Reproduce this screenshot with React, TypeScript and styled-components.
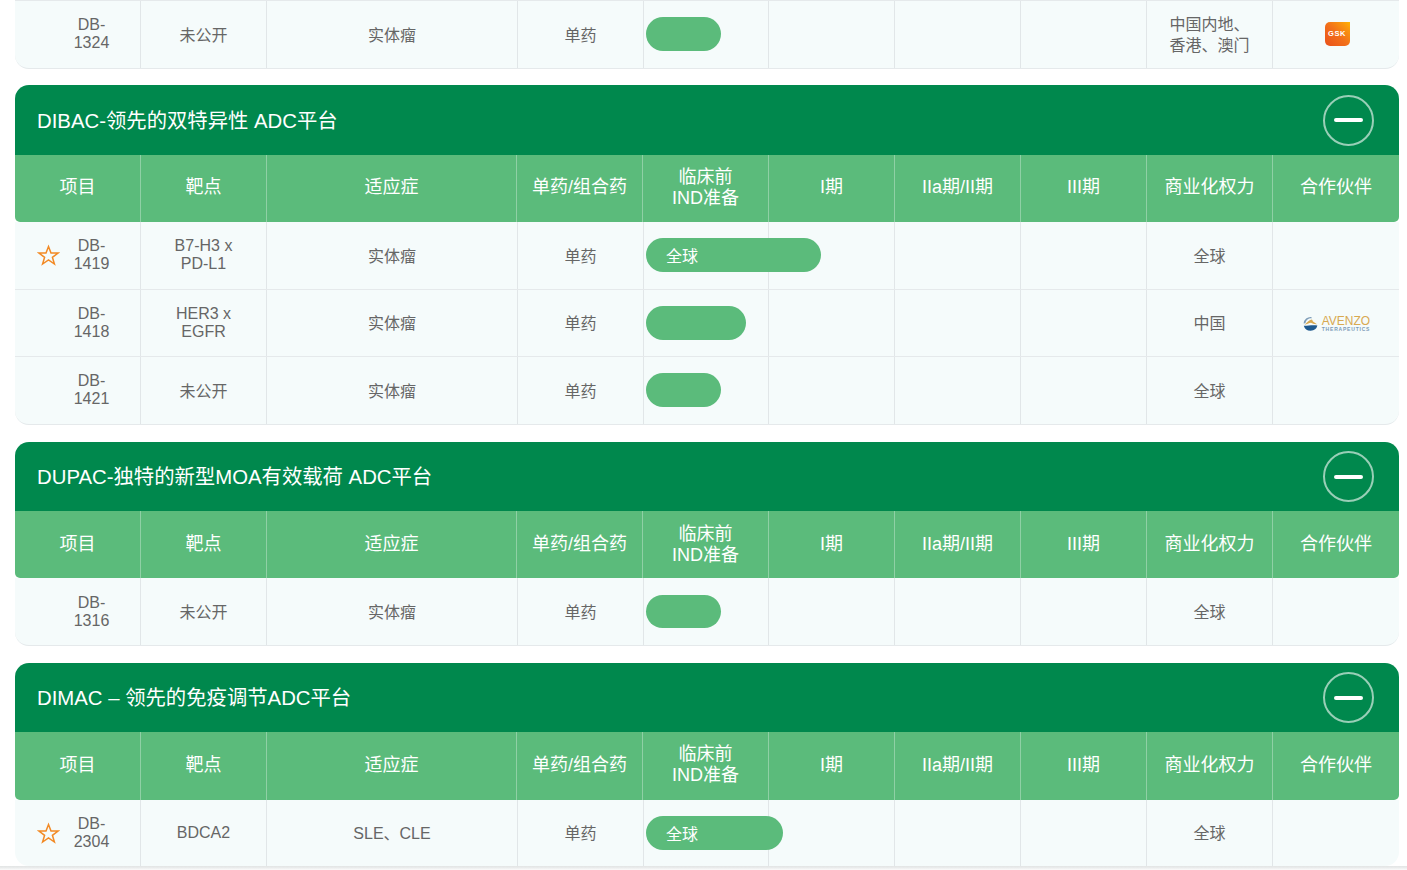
import React from "react";
import styled, { createGlobalStyle } from "styled-components";

const Global = createGlobalStyle`
  html, body { margin: 0; padding: 0; background: #fff; }
  body { font-family: "Liberation Sans", "Noto Sans CJK SC", Arial, sans-serif; color: #666; overflow: hidden; }
`;

const Page = styled.div`
  width: 1407px;
  height: 870px;
  overflow: hidden;
  position: relative;
  box-sizing: border-box;
  padding: 0 8px 0 15px;
  display: flex;
  flex-direction: column;
  gap: 16px;
`;

const PageEdge = styled.div`
  position: absolute;
  left: 0;
  right: 0;
  bottom: 0;
  height: 4px;
  background: linear-gradient(#e2e4e4, #e9ebeb 40%, #f5f5f5 75%, #fbfbfb);
`;

const Section = styled.section<{ $gap?: number }>`
  flex: none;
  margin-top: ${(p) => p.$gap ?? 0}px;
`;

const TitleBar = styled.header<{ $h: number }>`
  height: ${(p) => p.$h}px;
  background: #00884d;
  border-radius: 14px 14px 0 0;
  display: flex;
  align-items: center;
  justify-content: space-between;
  padding: 0 25px 0 22px;
`;

const Title = styled.h2<{ $top: number }>`
  margin: 0;
  padding-top: ${(p) => p.$top}px;
  font-size: 20.35px;
  line-height: 24px;
  font-weight: 400;
  color: #fff;
`;

const Toggle = styled.button`
  width: 51px;
  height: 51px;
  padding: 0;
  border: 2px solid rgba(255, 255, 255, 0.6);
  border-radius: 50%;
  background: transparent;
  box-sizing: border-box;
  display: flex;
  align-items: center;
  justify-content: center;
  &::before {
    content: "";
    width: 29px;
    height: 4px;
    border-radius: 2px;
    background: #fff;
  }
`;

const HeadRow = styled.div<{ $h: number }>`
  display: grid;
  grid-template-columns: 126px 126px 250px 126px 126px 126px 126px 126px 126px 126px;
  height: ${(p) => p.$h}px;
  background: #5bbb7b;
  border-radius: 0 0 5px 5px;
`;

const HeadCell = styled.div`
  display: flex;
  align-items: center;
  justify-content: center;
  text-align: center;
  box-sizing: border-box;
  font-size: 18px;
  line-height: 21px;
  color: #fff;
  border-right: 1px solid #8fd0a5;
  &:last-child { border-right: 0; }
`;

const HeadText = styled.span<{ $lift: boolean }>`
  white-space: pre-line;
  padding-bottom: ${(p) => (p.$lift ? 2 : 0)}px;
`;

const Body = styled.div`
  background: #f5fbfb;
  border-radius: 0 0 14px 14px;
`;

const Row = styled.div<{ $h: number; $top?: boolean; $flat?: boolean }>`
  display: grid;
  grid-template-columns: 126px 126px 251px 126px 125px 126px 126px 126px 126px 126px;
  height: ${(p) => p.$h}px;
  box-sizing: border-box;
  border-bottom: ${(p) => (p.$flat ? "0" : "1px solid #e5e9eb")};
  border-top: ${(p) => (p.$top ? "1px solid #e5e9eb" : "0")};
  &:last-child { border-radius: 0 0 14px 14px; }
`;

const Cell = styled.div`
  display: flex;
  align-items: center;
  justify-content: center;
  text-align: center;
  box-sizing: border-box;
  min-width: 0;
  font-size: 16px;
  line-height: 18px;
  color: #666;
  border-right: 1px solid #e1e6e8;
  &:last-child { border-right: 0; }
`;

const CjkText = styled.span`
  padding-top: 2px;
`;

const NameCell = styled(Cell)`
  justify-content: flex-start;
  padding-left: 22px;
`;

const StarSlot = styled.span`
  width: 23px;
  height: 23px;
  flex: none;
  margin-right: 7px;
  display: flex;
  align-items: center;
  justify-content: center;
`;

const Code = styled.span<{ $low?: boolean }>`
  width: 49px;
  flex: none;
  text-align: center;
  padding: ${(p) => (p.$low ? "1px 0 0" : "0 0 1px")};
`;

const LatinText = styled.span`
  white-space: pre-line;
  padding-bottom: 1px;
`;

const BarCell = styled(Cell)`
  justify-content: flex-start;
  align-items: flex-start;
  padding-left: 2px;
`;

const Pill = styled.div<{ $w: number; $top: number; $h: number }>`
  flex: none;
  position: relative;
  z-index: 1;
  width: ${(p) => p.$w}px;
  height: ${(p) => p.$h}px;
  margin-top: ${(p) => p.$top}px;
  border-radius: 17px;
  background: #5bbb7b;
  box-sizing: border-box;
  padding: 4px 0 0 20px;
  display: flex;
  align-items: center;
  color: #fff;
  font-size: 16px;
  line-height: 18px;
`;

const RightsText = styled.span`
  white-space: pre-line;
  text-align: left;
  line-height: 21px;
  padding-top: 1px;
`;

const GskMark = styled.div`
  width: 25px;
  height: 24px;
  margin: 0 0 1px 2px;
  border-radius: 5px 0 5px 5px;
  background: linear-gradient(45deg, #e9501b 0%, #f2701a 50%, #fb9b0c 85%, #ffb400 100%);
  display: flex;
  align-items: center;
  justify-content: center;
  color: #fff;
  font-size: 7.5px;
  line-height: 8px;
  font-weight: 700;
  letter-spacing: 0.5px;
`;

const Avenzo = styled.div`
  display: flex;
  align-items: center;
  gap: 4px;
  margin: 2px 0 0 1px;
`;

const AvenzoWords = styled.div`
  display: flex;
  flex-direction: column;
  align-items: flex-start;
`;

const AvenzoName = styled.span`
  font-size: 12px;
  line-height: 10px;
  color: #d8a951;
`;

const AvenzoSub = styled.span`
  font-size: 5px;
  line-height: 5px;
  font-weight: 700;
  letter-spacing: 0.8px;
  color: #7d9cb8;
  margin-top: 1px;
`;

const Star = () => (
  <svg width="23" height="23" viewBox="0 0 23 23" fill="none" stroke="#f28a25" strokeWidth="1.5" strokeLinejoin="miter">
    <path d="M11.5 2.5 L14 9.1 L21 9.1 L15.4 13.3 L17.4 20 L11.5 16 L5.6 20 L7.6 13.3 L2 9.1 L9 9.1 Z" />
  </svg>
);

const AvenzoIcon = () => (
  <svg width="15" height="16" viewBox="0 0 15 16">
    <path d="M8.5 1 A7 7 0 0 0 .6 7.6 L2.4 7.2 A5.6 5.6 0 0 1 8.5 2.4 Z" fill="#7f9db8" />
    <path d="M1.6 9 C4 6.2 6.6 3.6 9 3.4 L10 5.4 L14 8.2 C11.5 8.6 9.5 7.4 8 6.8 C6 7 3.6 8.2 1.6 9 Z" fill="#d8a951" />
    <path d="M.8 9.8 C4.5 10 9.5 8.6 14.4 9.6 A7 6.6 0 0 1 .8 9.8 Z" fill="#1f5a8f" />
  </svg>
);

const heads = ["项目", "靶点", "适应症", "单药/组合药", "临床前\nIND准备", "I期", "IIa期/II期", "III期", "商业化权力", "合作伙伴"];

type RowData = {
  code: string;
  codeLow?: boolean;
  star?: boolean;
  target: string;
  targetCjk?: boolean;
  indication?: string;
  width: number;
  pillTop?: number;
  pillH?: number;
  label?: string;
  rights: string;
  partner?: React.ReactNode;
  h: number;
  top?: boolean;
  flat?: boolean;
};

const TableRow = ({ d }: { d: RowData }) => (
  <Row $h={d.h} $top={d.top} $flat={d.flat}>
    <NameCell>
      <StarSlot>{d.star && <Star />}</StarSlot>
      <Code $low={d.codeLow}>{d.code}</Code>
    </NameCell>
    <Cell>{d.targetCjk ? <CjkText>{d.target}</CjkText> : <LatinText>{d.target}</LatinText>}</Cell>
    <Cell><CjkText>{d.indication ?? "实体瘤"}</CjkText></Cell>
    <Cell><CjkText>单药</CjkText></Cell>
    <BarCell><Pill $w={d.width} $top={d.pillTop ?? 16} $h={d.pillH ?? 34}>{d.label}</Pill></BarCell>
    <Cell />
    <Cell />
    <Cell />
    <Cell>{d.rights.includes("\n") ? <RightsText>{d.rights}</RightsText> : <CjkText>{d.rights}</CjkText>}</Cell>
    <Cell>{d.partner}</Cell>
  </Row>
);

const Platform = ({
  title,
  bar,
  head,
  rows,
  gap,
  lift,
  titleTop,
}: {
  title: string;
  bar: number;
  head: number;
  rows: RowData[];
  gap: number;
  lift: boolean;
  titleTop: number;
}) => (
  <Section $gap={gap}>
    <TitleBar $h={bar}>
      <Title $top={titleTop}>{title}</Title>
      <Toggle aria-label="collapse" />
    </TitleBar>
    <HeadRow $h={head}>
      {heads.map((h) => (
        <HeadCell key={h}><HeadText $lift={lift}>{h}</HeadText></HeadCell>
      ))}
    </HeadRow>
    <Body>
      {rows.map((r) => (
        <TableRow key={r.code} d={r} />
      ))}
    </Body>
  </Section>
);

export default function App() {
  return (
    <Page>
      <Global />
      <Section>
        <Body>
          <TableRow
            d={{
              code: "DB-1324",
              target: "未公开",
              targetCjk: true,
              width: 75,
              rights: "中国内地、\n香港、澳门",
              partner: <GskMark>GSK</GskMark>,
              h: 69,
              top: true,
            }}
          />
        </Body>
      </Section>
      <Platform
        gap={0}
        title="DIBAC-领先的双特异性 ADC平台"
        bar={70}
        head={67}
        lift
        titleTop={2}
        rows={[
          { code: "DB-1419", star: true, target: "B7-H3 x\nPD-L1", width: 175, label: "全球", rights: "全球", h: 68 },
          {
            code: "DB-1418",
            target: "HER3 x\nEGFR",
            width: 100,
            rights: "中国",
            h: 67,
            partner: (
              <Avenzo>
                <AvenzoIcon />
                <AvenzoWords>
                  <AvenzoName>AVENZO</AvenzoName>
                  <AvenzoSub>THERAPEUTICS</AvenzoSub>
                </AvenzoWords>
              </Avenzo>
            ),
          },
          { code: "DB-1421", target: "未公开", targetCjk: true, width: 75, rights: "全球", h: 68 },
        ]}
      />
      <Platform
        gap={1}
        title="DUPAC-独特的新型MOA有效载荷 ADC平台"
        bar={69}
        head={67}
        lift={false}
        titleTop={0}
        rows={[{ code: "DB-1316", codeLow: true, target: "未公开", targetCjk: true, width: 75, pillTop: 17, pillH: 33, rights: "全球", h: 68 }]}
      />
      <Platform
        gap={1}
        title="DIMAC – 领先的免疫调节ADC平台"
        bar={69}
        head={68}
        lift
        titleTop={0}
        rows={[{ code: "DB-2304", star: true, target: "BDCA2", indication: "SLE、CLE", width: 137, label: "全球", rights: "全球", h: 66, flat: true }]}
      />
      <PageEdge />
    </Page>
  );
}
